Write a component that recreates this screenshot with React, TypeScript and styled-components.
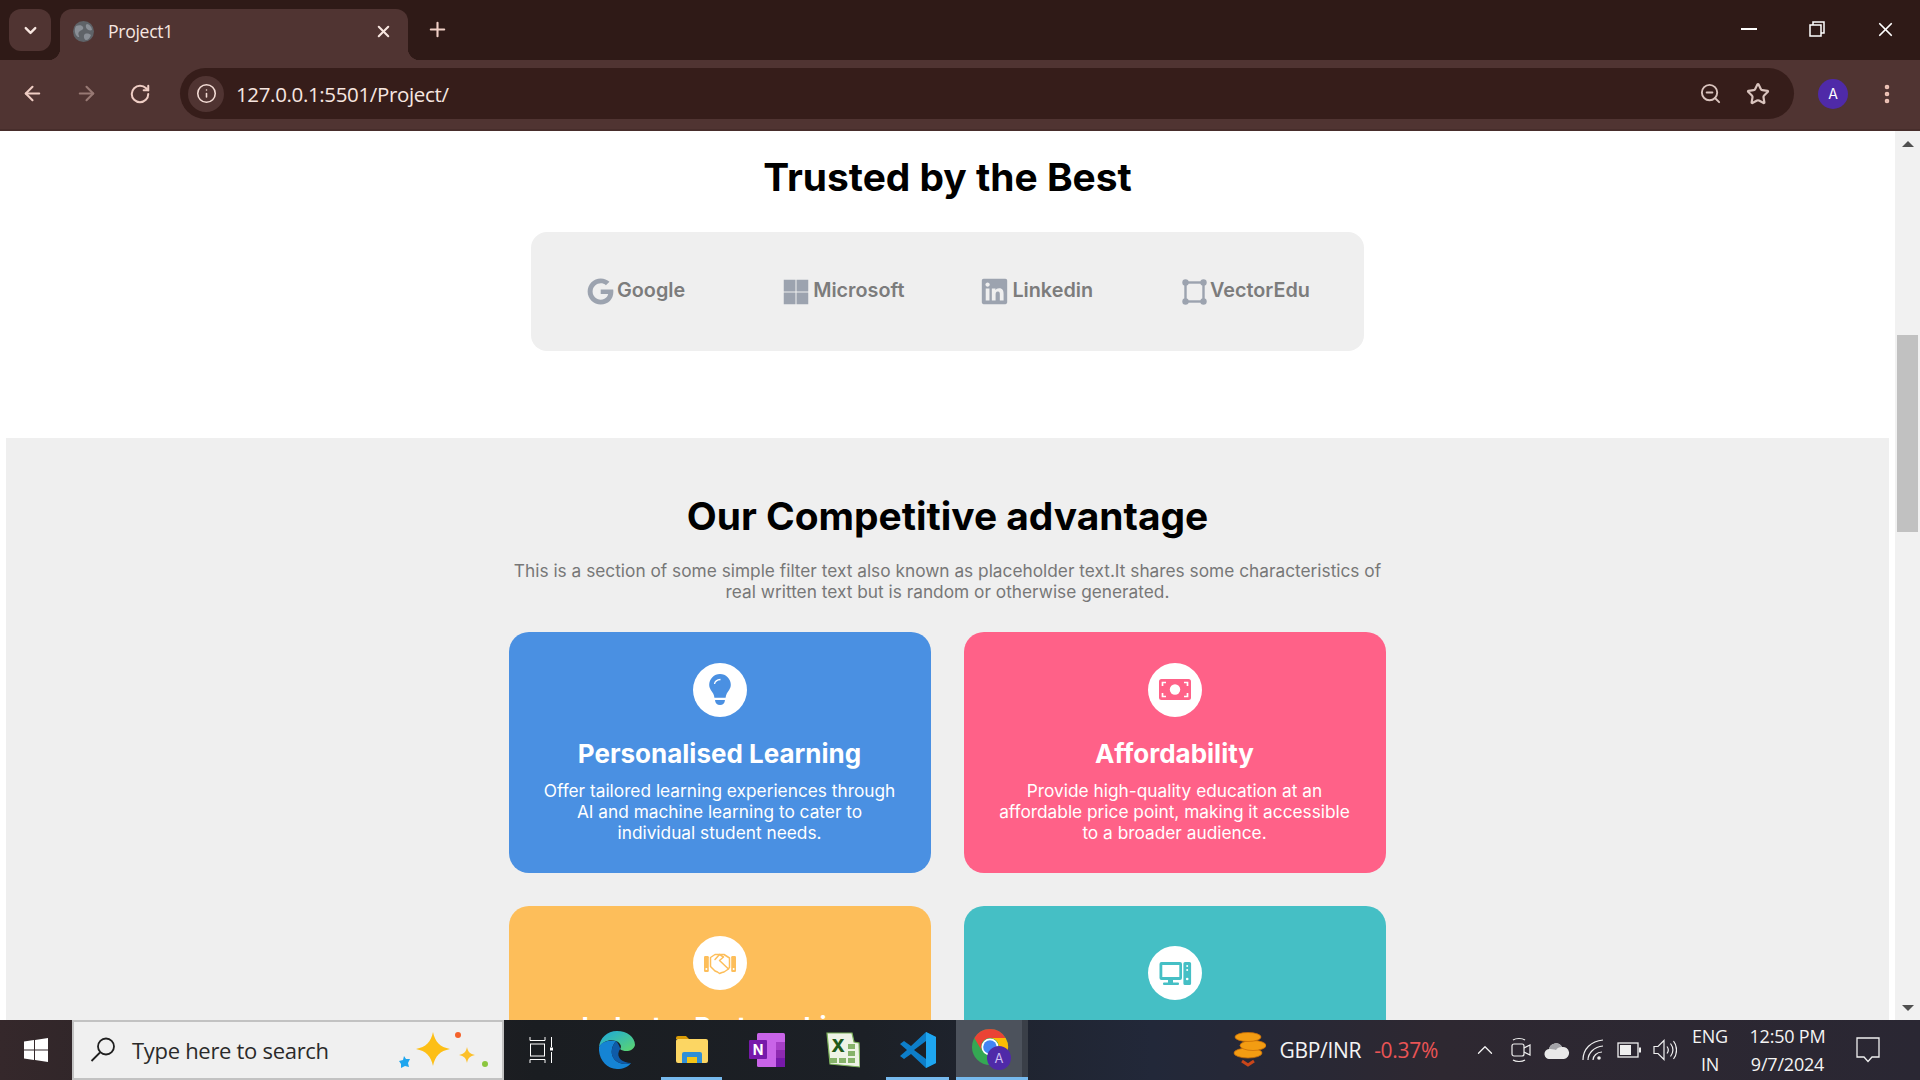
import React from "react";
import styled, { createGlobalStyle } from "styled-components";
import {
  ArrowLeft,
  ArrowRight,
  ChevronDown,
  ChevronUp,
  EllipsisVertical,
  Info,
  Plus,
  RotateCw,
  Star,
  X,
  ZoomOut,
} from "lucide-react";
import { FaGoogle, FaLinkedin, FaMicrosoft } from "react-icons/fa";

const GlobalStyle = createGlobalStyle`
  html, body {
    margin: 0;
    padding: 0;
    height: 100%;
    overflow: hidden;
    background: #ffffff;
    font-family: "Inter", "Liberation Sans", sans-serif;
  }
  * { box-sizing: border-box; }
`;

const Screen = styled.div`
  width: 1920px;
  height: 1080px;
  display: flex;
  flex-direction: column;
  overflow: hidden;
`;

/* browser chrome */
const TabStrip = styled.div`
  height: 60px;
  flex: none;
  display: flex;
  align-items: flex-start;
  background: #2f1a17;
  color: #f7e6e0;
  font-family: "Open Sans", "Noto Sans", sans-serif;
`;

const TabMenu = styled.div`
  width: 42px;
  height: 42px;
  margin: 9px 9px 0;
  border-radius: 12px;
  background: #503432;
  display: flex;
  align-items: center;
  justify-content: center;
`;

const Tab = styled.div`
  position: relative;
  width: 348px;
  height: 51px;
  margin-top: 9px;
  padding: 0 15px 7px 13px;
  background: #503432;
  border-radius: 12px 12px 0 0;
  display: flex;
  align-items: center;
  gap: 14px;
  font-size: 17.6px;
  letter-spacing: -0.3px;

  &::before,
  &::after {
    content: "";
    position: absolute;
    bottom: 0;
    width: 12px;
    height: 12px;
  }
  &::before {
    left: -12px;
    background: radial-gradient(circle at 0 0, #2f1a17 12px, #503432 12.5px);
  }
  &::after {
    right: -12px;
    background: radial-gradient(circle at 100% 0, #2f1a17 12px, #503432 12.5px);
  }
`;

const TabTitle = styled.span`
  flex: 1;
`;

const NewTab = styled.div`
  margin: 18px 0 0 18px;
  display: flex;
`;

const WindowControls = styled.div`
  margin-left: auto;
  display: flex;
  align-items: center;
  height: 58px;
  padding-right: 1px;
`;

const WindowButton = styled.div`
  width: 68px;
  display: flex;
  justify-content: center;
`;

const Toolbar = styled.div`
  height: 71px;
  flex: none;
  display: flex;
  align-items: center;
  padding: 0 0 2px 5px;
  background: #503432;
  border-bottom: 2px solid #472d2b;
  color: #efcdc4;
`;

const NavButton = styled.div<{ $dim?: boolean }>`
  width: 54px;
  display: flex;
  justify-content: center;
  opacity: ${(p) => (p.$dim ? 0.45 : 1)};
`;

const Omnibox = styled.div`
  width: 1614px;
  height: 51px;
  margin-left: 13px;
  padding: 0 12px 0 8px;
  border-radius: 26px;
  background: #361d1a;
  display: flex;
  align-items: center;
`;

const InfoChip = styled.div`
  width: 36px;
  height: 36px;
  border-radius: 50%;
  background: #503432;
  color: #f3dcd5;
  display: flex;
  align-items: center;
  justify-content: center;
`;

const Url = styled.div`
  margin-left: 12px;
  flex: 1;
  color: #f7e6e0;
  font-family: "Open Sans", "Noto Sans", sans-serif;
  font-size: 20.5px;
  letter-spacing: -0.35px;
`;

const OmniAction = styled.div`
  width: 48px;
  display: flex;
  justify-content: center;
  color: #d9c3bd;
`;

const Avatar = styled.div`
  width: 30px;
  height: 30px;
  margin-left: 24px;
  border-radius: 50%;
  background: #4f2aa8;
  color: #ffffff;
  font-size: 14px;
  display: flex;
  align-items: center;
  justify-content: center;
`;

const MenuDots = styled.div`
  margin-left: 27px;
  display: flex;
  color: #efc4b8;
`;

/* page */
const Viewport = styled.div`
  flex: 1;
  min-height: 0;
  display: flex;
  overflow: hidden;
  background: #ffffff;
`;

const Page = styled.main`
  flex: 1;
  min-width: 0;
  padding-top: 23px;
`;

const Scrollbar = styled.div`
  width: 25px;
  flex: none;
  padding: 0 1px;
  background: #f1f1f1;
  display: flex;
  flex-direction: column;
  align-items: center;
`;

const ScrollArrow = styled.div<{ $down?: boolean }>`
  width: 0;
  height: 0;
  margin: ${(p) => (p.$down ? "auto 0 9px" : "10px 0 0")};
  border-left: 6px solid transparent;
  border-right: 6px solid transparent;
  ${(p) => (p.$down ? "border-top: 6px solid #505050;" : "border-bottom: 6px solid #505050;")}
`;

const ScrollThumb = styled.div`
  width: 21px;
  height: 197px;
  margin-top: 188px;
  background: #c1c1c1;
`;

const Heading = styled.h2`
  margin: 0;
  text-align: center;
  color: #000000;
  font-size: 38.9px;
  line-height: 46px;
  font-weight: 700;
`;

const LogoBar = styled.div`
  width: 833px;
  height: 119px;
  margin: 32px 0 87px 531px;
  padding: 0 0 3px 56px;
  border-radius: 16px;
  background: #efefef;
  display: flex;
  align-items: center;
`;

const Logo = styled.div<{ $gap: number }>`
  margin-left: ${(p) => p.$gap}px;
  display: flex;
  align-items: center;
  gap: 3px;
  color: #7c7c7c;
  font-size: 19.8px;
  font-weight: 600;

  svg {
    color: #9ca3af;
    flex: none;
    margin-top: 3px;
  }
`;

const Advantages = styled.section`
  margin: 0 6px;
  padding-top: 55px;
  background: #efefef;
`;

const Intro = styled.p`
  width: 880px;
  margin: 21px auto 30px;
  text-align: center;
  color: #777777;
  font-size: 17.3px;
  line-height: 21px;
`;

const CardGrid = styled.div`
  display: grid;
  grid-template-columns: 422px 422px;
  gap: 33px;
  justify-content: center;
  padding-right: 1px;
`;

const Card = styled.article<{ $bg: string; $top: number }>`
  height: 241px;
  padding: ${(p) => p.$top}px 30px 30px;
  border-radius: 20px;
  background: ${(p) => p.$bg};
  color: #ffffff;
  text-align: center;
`;

const IconCircle = styled.div<{ $color: string }>`
  width: 54px;
  height: 54px;
  margin: 0 auto;
  border-radius: 50%;
  background: #ffffff;
  color: ${(p) => p.$color};
  display: flex;
  align-items: center;
  justify-content: center;
`;

const CardTitle = styled.h3`
  margin: 21px 0 10px;
  font-size: 26px;
  line-height: 32px;
  font-weight: 700;
`;

const CardText = styled.p`
  margin: 0;
  font-size: 17.3px;
  line-height: 21px;
  font-weight: 400;
`;

/* taskbar */
const Taskbar = styled.div`
  height: 60px;
  flex: none;
  display: flex;
  align-items: stretch;
  background: linear-gradient(90deg, #35282b 0, #1a1d21 28%, #1c2026 45%, #222839 60%, #2e2831 75%, #2a2733 100%);
  color: #f4f4f4;
  font-family: "Open Sans", "Noto Sans", sans-serif;
`;

const StartButton = styled.div`
  width: 72px;
  display: flex;
  align-items: center;
  justify-content: center;
`;

const SearchBox = styled.div`
  width: 432px;
  padding: 0 3px 0 16px;
  background: #f0f0f0;
  border: 2px solid #c2c2c2;
  display: flex;
  align-items: center;
  color: #2a2a2a;
  font-size: 22px;
  letter-spacing: -0.3px;
`;

const SearchLabel = styled.span`
  margin-left: 16px;
  flex: 1;
`;

const TaskSlot = styled.div<{ $w: number; $active?: boolean; $open?: boolean }>`
  position: relative;
  width: ${(p) => p.$w}px;
  display: flex;
  align-items: center;
  justify-content: center;
  background: ${(p) => (p.$active ? "#4c525c" : "transparent")};
  ${(p) => (p.$active ? "border-right: 6px solid #3a3f48; padding-left: 6px;" : "")}

  &::after {
    content: "";
    display: ${(p) => (p.$open ? "block" : "none")};
    position: absolute;
    left: ${(p) => (p.$active ? 0 : 7)}px;
    right: ${(p) => (p.$active ? -6 : 7)}px;
    bottom: 0;
    height: 3px;
    background: #76b9ed;
  }
`;

const Tray = styled.div`
  margin-left: auto;
  display: flex;
  align-items: center;
  font-size: 21px;
  letter-spacing: -0.3px;
`;

const Ticker = styled.div`
  display: flex;
  align-items: center;
  gap: 13px;
  margin-right: 29px;
`;

const Change = styled.span`
  color: #ea5455;
`;

const TraySlot = styled.div`
  width: 36px;
  display: flex;
  justify-content: center;
`;

const TrayText = styled.div<{ $w: number }>`
  width: ${(p) => p.$w}px;
  display: flex;
  flex-direction: column;
  align-items: center;
  gap: 4px;
  font-size: 18px;
  line-height: 24px;
  letter-spacing: -0.2px;
`;

const Notify = styled.div`
  width: 82px;
  padding-right: 22px;
  display: flex;
  justify-content: center;
`;

/* drawings */
const Bulb = () => (
  <svg width="54" height="54" viewBox="0 0 54 54" fill="currentColor">
    <path d="M27 11a10.8 10.8 0 0 0-10.8 10.8c0 4 2.6 6 4.1 9 .7 1.3.9 2.6 1.1 4h11.2c.2-1.4.4-2.7 1.1-4 1.5-3 4.1-5 4.1-9A10.8 10.8 0 0 0 27 11z" />
    <path d="M22 37h10c-.3 3.200-2 5-5 5s-4.700-1.800-5-5z" />
    <path d="M21.500 21c.4-2.400 2.500-4.300 6-4.500" fill="none" stroke="#fff" strokeWidth="1.300" />
  </svg>
);

const Money = () => (
  <svg width="54" height="54" viewBox="0 0 54 54">
    <rect x="11" y="16" width="32" height="21" rx="2.500" fill="currentColor" />
    <circle cx="27" cy="26.500" r="5.200" fill="#fff" />
    <path
      d="M14.500 23v-3.500H18M39.500 23v-3.500H36M14.500 30v3.500H18M39.500 30v3.500H36"
      fill="none"
      stroke="#fff"
      strokeWidth="1.700"
    />
  </svg>
);

const Handshake = () => (
  <svg width="54" height="54" viewBox="0 0 54 54" fill="currentColor">
    <rect x="11" y="20" width="4.800" height="16" rx="1.200" />
    <rect x="38.200" y="20" width="4.800" height="16" rx="1.200" />
    <circle cx="13.400" cy="33" r="1" fill="#fff" />
    <circle cx="40.600" cy="33" r="1" fill="#fff" />
    <g fill="none" stroke="currentColor" strokeWidth="1.500" strokeLinejoin="round" strokeLinecap="round">
      <path d="M17.500 21.500 22 18.500h9l5.500 3.500v9.500l-2.500 2.500-3 2-2 .5-2.500 1-2-1.500-2.500-1-4.500-4.500z" />
      <path d="M22 23.500l4.500-5 4 2.500-4 3.500 9 8.500" />
    </g>
  </svg>
);

const Computer = () => (
  <svg width="54" height="54" viewBox="0 0 54 54" fill="currentColor">
    <path d="M13.500 16h18.500a2 2 0 0 1 2 2v14a2 2 0 0 1-2 2H13.500a2 2 0 0 1-2-2V18a2 2 0 0 1 2-2zm.8 3v12h17V19z" fillRule="evenodd" />
    <rect x="20" y="34" width="5" height="3" />
    <rect x="15" y="36.500" width="16" height="2.500" rx="1" />
    <path d="M37 16h4.500a1.600 1.600 0 0 1 1.600 1.600v19.800a1.600 1.600 0 0 1-1.600 1.600H37a1.600 1.600 0 0 1-1.600-1.600V17.600A1.600 1.600 0 0 1 37 16z" />
    <circle cx="39.200" cy="20" r="1" fill="#fff" />
    <circle cx="39.200" cy="24" r="1" fill="#fff" />
    <circle cx="39.200" cy="33" r="1.300" fill="#fff" />
  </svg>
);

const VectorMark = () => (
  <svg width="25" height="26" viewBox="0 0 25 26" fill="none" stroke="currentColor" strokeWidth="2.400">
    <rect x="3.500" y="3.500" width="18" height="19" />
    <g fill="currentColor" stroke="none">
      <circle cx="3.500" cy="3.500" r="3.200" />
      <circle cx="21.500" cy="3.500" r="3.200" />
      <circle cx="3.500" cy="22.500" r="3.200" />
      <circle cx="21.500" cy="22.500" r="3.200" />
    </g>
  </svg>
);

const Restore = () => (
  <svg width="16" height="16" viewBox="0 0 16 16" fill="none" stroke="#fff" strokeWidth="1.500">
    <rect x="1" y="4" width="11" height="11" />
    <path d="M4 4V1h11v11h-3" />
  </svg>
);

const Favicon = () => (
  <svg width="21" height="21" viewBox="0 0 21 21">
    <circle cx="10.500" cy="10.500" r="10.500" fill="#5f6368" />
    <path d="M3 5c3-1 6-1 7 1s-1 3-3 4-2 3-1 5-2 1-3-1-2-6 0-9zM14 3c2 0 5 3 5 6-2 1-4 0-5-1s-2-4 0-5zM12 13c2-1 5 0 6 1-1 3-3 5-5 5s-3-5-1-6z" fill="#8a8f96" />
  </svg>
);

const WinLogo = () => (
  <svg width="24" height="24" viewBox="0 0 24 24" fill="#fff">
    <path d="M0 3.400 10 2v9.400H0zM11 1.900 24 0v11.400H11zM0 12.600h10V22L0 20.600zM11 12.600h13V24l-13-1.900z" />
  </svg>
);

const SearchGlass = () => (
  <svg width="26" height="26" viewBox="0 0 26 26" fill="none" stroke="#1f1f1f" strokeWidth="1.800">
    <circle cx="16" cy="9.500" r="8" />
    <path d="M10 15.500 1.500 24" />
  </svg>
);

const Sparkles = () => (
  <svg width="100" height="50" viewBox="0 0 100 50">
    <path d="M34 7c2 10 7 15 17 17-10 2-15 7-17 17-2-10-7-15-17-17 10-2 15-7 17-17z" fill="#fdbf16" />
    <path d="M68 22c1 5 3 7 8 8-5 1-7 3-8 8-1-5-3-7-8-8 5-1 7-3 8-8z" fill="#fcc02a" />
    <path d="M5 31l2 3 4 0-2 4 1 4-4-1-4 2 0-4-2-3 4-1z" fill="#1ea5ee" />
    <circle cx="59" cy="10" r="3" fill="#f4622b" />
    <circle cx="86" cy="39" r="3" fill="#8cc63f" />
  </svg>
);

const TaskView = () => (
  <svg width="26" height="26" viewBox="0 0 26 26" fill="none" stroke="#fff" strokeWidth="1">
    <path d="M1 3.500h15M1 3.500V0M16 3.500V0M1 22.500h15M1 22.500V26M16 22.500V26M22.500 0v10M22.500 15v11" />
    <rect x="1.500" y="7" width="14" height="12" />
    <rect x="21" y="10.500" width="3" height="3" fill="#fff" stroke="none" />
  </svg>
);

const Edge = () => (
  <svg width="36" height="38" viewBox="0 0 36 38">
    <defs>
      <linearGradient id="edgeTop" x1="0" y1="0" x2="1" y2="1">
        <stop offset="0" stopColor="#1ba7e0" />
        <stop offset="1" stopColor="#5ed66b" />
      </linearGradient>
    </defs>
    <path d="M18 0C8 0 1 7 0 16c4-6 11-8 17-6 5 2 6 6 4 8 5 4 14 2 15-4C36 6 28 0 18 0z" fill="url(#edgeTop)" />
    <path d="M0 16c-1 11 7 22 18 22 6 0 11-2 14-6-5 2-12 1-16-3-5-5-4-13 1-19-7-1-14 0-17 6z" fill="#1584d4" />
    <path d="M17 10c-5 6-6 14-1 19 4 4 11 5 16 3-8 0-15-5-12-12 1-2 2-2 1-3-1-3-2-5-4-7z" fill="#0f5ba8" />
  </svg>
);

const Explorer = () => (
  <svg width="32" height="28" viewBox="0 0 32 28">
    <path d="M0 2a2 2 0 0 1 2-2h8l3 3H0z" fill="#d99b06" />
    <rect x="0" y="3" width="32" height="24" rx="2" fill="#fcd663" />
    <path d="M6 27V18a2 2 0 0 1 2-2h16a2 2 0 0 1 2 2v9h-5v-6H11v6z" fill="#2f8fd8" />
    <rect x="11" y="21" width="10" height="6" fill="#f5c518" />
  </svg>
);

const OneNote = () => (
  <svg width="36" height="34" viewBox="0 0 36 34">
    <rect x="8" y="0" width="28" height="34" rx="1.500" fill="#c964e8" />
    <rect x="27" y="9" width="9" height="8" fill="#a63fc6" />
    <rect x="27" y="17" width="9" height="8" fill="#8e2ab0" />
    <rect x="27" y="25" width="9" height="9" fill="#7719aa" />
    <rect x="0" y="7" width="18" height="19" rx="1" fill="#7719aa" />
    <text x="9" y="22" textAnchor="middle" fill="#fff" fontSize="14" fontWeight="700" fontFamily="Inter, sans-serif">N</text>
  </svg>
);

const Excel = () => (
  <svg width="36" height="36" viewBox="0 0 36 36">
    <path d="M3 1h25l2 9 5 1 1 24-30-3z" fill="#eef3e6" stroke="#7cb25a" strokeWidth="1.200" />
    <g fill="#86b36a">
      <rect x="24" y="12" width="7" height="5" />
      <rect x="24" y="19" width="7" height="5" />
      <rect x="24" y="26" width="7" height="5" />
      <rect x="6" y="26" width="7" height="5" />
      <rect x="15" y="26" width="7" height="5" />
    </g>
    <text x="14" y="20" textAnchor="middle" fill="#1f5a1a" fontSize="18" fontWeight="800" fontFamily="Inter, sans-serif">X</text>
  </svg>
);

const VsCode = () => (
  <svg width="36" height="36" viewBox="0 0 36 36">
    <path d="M26 0 36 5v26l-10 5-15-14-7 5-4-3 7-6-7-6 4-3 7 5z" fill="#0d7ec9" />
    <path d="M26 0 36 5v26l-10 5z" fill="#1ea6f0" />
    <path d="M26 9v18l-12-9z" fill="#1c2026" />
  </svg>
);

const Chrome = () => (
  <svg width="40" height="42" viewBox="0 0 40 42">
    <circle cx="18" cy="18" r="18" fill="#34a853" />
    <path d="M18 0a18 18 0 0 0-15.600 9L10 22a9 9 0 0 1 8-13h15.600A18 18 0 0 0 18 0z" fill="#ea4335" />
    <path d="M33.600 9H18a9 9 0 0 1 8 13l-8 14A18 18 0 0 0 33.600 9z" fill="#fbbc04" />
    <circle cx="18" cy="18" r="8.500" fill="#fff" />
    <circle cx="18" cy="18" r="6.800" fill="#4285f4" />
    <circle cx="27" cy="29" r="12" fill="#4f2aa8" />
    <text x="27" y="34" textAnchor="middle" fill="#cdbdf0" fontSize="13" fontFamily="Inter, sans-serif">A</text>
  </svg>
);

const Coins = () => (
  <svg width="33" height="36" viewBox="0 0 33 36">
    <g fill="#f39c12" stroke="#c96f08" strokeWidth="0.800">
      <ellipse cx="15" cy="21" rx="14" ry="5" />
      <ellipse cx="20" cy="13.500" rx="13" ry="5" />
      <ellipse cx="15" cy="5" rx="13" ry="4.500" />
    </g>
    <path d="M9 29l6 4 6-4" fill="none" stroke="#c8461a" strokeWidth="3" />
  </svg>
);

const MeetNow = () => (
  <svg width="22" height="30" viewBox="0 0 22 30" fill="none" stroke="#f0f0f0" strokeWidth="1.200">
    <rect x="2" y="9" width="12" height="12" rx="2" />
    <path d="M14 13l6-3v10l-6-3M3 5c3-2 9-2 12 0M3 25c3 2 9 2 12 0" />
  </svg>
);

const Cloud = () => (
  <svg width="26" height="18" viewBox="0 0 26 18">
    <path d="M6 18a5 5 0 0 1-1-10A7 7 0 0 1 18 6a6 6 0 0 1 2 12z" fill="#e9e9e9" />
    <path d="M5 8a7 7 0 0 1 13-2c-3 0-5 1-6 3-2-1-5-1-7-1z" fill="#a3a3a8" />
  </svg>
);

const Wifi = () => (
  <svg width="22" height="22" viewBox="0 0 22 22" fill="none" stroke="#f0f0f0" strokeWidth="1.200">
    <path d="M1 21C1 10 9 2 21 1M6 21c0-7 6-13 15-14M11 21c0-4 4-8 9-8" />
    <circle cx="17" cy="19" r="1.800" fill="#f0f0f0" stroke="none" />
  </svg>
);

const Battery = () => (
  <svg width="24" height="16" viewBox="0 0 24 16">
    <rect x="1" y="1" width="20" height="14" fill="none" stroke="#f0f0f0" strokeWidth="1.300" />
    <rect x="3" y="3" width="11" height="10" fill="#f0f0f0" />
    <rect x="22" y="5.500" width="2" height="5" fill="#f0f0f0" />
  </svg>
);

const Speaker = () => (
  <svg width="24" height="22" viewBox="0 0 24 22" fill="none" stroke="#f0f0f0" strokeWidth="1.200">
    <path d="M1 7.500h4l6-6v19l-6-6H1zM14 7.500c1.500 2 1.500 5 0 7M17.500 4.500c3 4 3 9 0 13M20.500 2c4 5 4 13 0 18" />
  </svg>
);

const NotifyIcon = () => (
  <svg width="24" height="26" viewBox="0 0 24 26" fill="none" stroke="#f0f0f0" strokeWidth="1.300">
    <path d="M1 1h22v19h-7l-4 4.500L8 20H1z" />
  </svg>
);

function App() {
  return (
    <Screen>
      <GlobalStyle />
      <TabStrip>
        <TabMenu>
          <ChevronDown size={19} strokeWidth={3} color="#f7e6e0" />
        </TabMenu>
        <Tab>
          <Favicon />
          <TabTitle>Project1</TabTitle>
          <X size={19} strokeWidth={2.6} color="#f7e6e0" />
        </Tab>
        <NewTab>
          <Plus size={23} strokeWidth={2.2} color="#f0cfc6" />
        </NewTab>
        <WindowControls>
          <WindowButton>
            <svg width="16" height="2" viewBox="0 0 16 2">
              <rect width="16" height="2" fill="#fff" />
            </svg>
          </WindowButton>
          <WindowButton>
            <Restore />
          </WindowButton>
          <WindowButton>
            <X size={23} strokeWidth={1.8} color="#fff" />
          </WindowButton>
        </WindowControls>
      </TabStrip>

      <Toolbar>
        <NavButton>
          <ArrowLeft size={23} strokeWidth={2.2} />
        </NavButton>
        <NavButton $dim>
          <ArrowRight size={23} strokeWidth={2.2} />
        </NavButton>
        <NavButton>
          <RotateCw size={22} strokeWidth={2.2} />
        </NavButton>
        <Omnibox>
          <InfoChip>
            <Info size={21} strokeWidth={1.8} />
          </InfoChip>
          <Url>127.0.0.1:5501/Project/</Url>
          <OmniAction>
            <ZoomOut size={23} strokeWidth={2} />
          </OmniAction>
          <OmniAction>
            <Star size={24} strokeWidth={2.2} />
          </OmniAction>
        </Omnibox>
        <Avatar>A</Avatar>
        <MenuDots>
          <EllipsisVertical size={24} strokeWidth={2.6} />
        </MenuDots>
      </Toolbar>

      <Viewport>
        <Page>
          <Heading>Trusted by the Best</Heading>
          <LogoBar>
            <Logo $gap={0}>
              <FaGoogle size={27} />
              Google
            </Logo>
            <Logo $gap={97}>
              <FaMicrosoft size={28} />
              Microsoft
            </Logo>
            <Logo $gap={76}>
              <FaLinkedin size={29} />
              Linkedin
            </Logo>
            <Logo $gap={89}>
              <VectorMark />
              VectorEdu
            </Logo>
          </LogoBar>

          <Advantages>
            <Heading>Our Competitive advantage</Heading>
            <Intro>
              This is a section of some simple filter text also known as placeholder text.It shares some
              characteristics of real written text but is random or otherwise generated.
            </Intro>
            <CardGrid>
              <Card $bg="#4a90e2" $top={31}>
                <IconCircle $color="#4a90e2">
                  <Bulb />
                </IconCircle>
                <CardTitle>Personalised Learning</CardTitle>
                <CardText>
                  Offer tailored learning experiences through AI and machine learning to cater to individual
                  student needs.
                </CardText>
              </Card>
              <Card $bg="#ff6188" $top={31}>
                <IconCircle $color="#ff6188">
                  <Money />
                </IconCircle>
                <CardTitle>Affordability</CardTitle>
                <CardText>
                  Provide high-quality education at an affordable price point, making it accessible to a
                  broader audience.
                </CardText>
              </Card>
              <Card $bg="#fdbe5a" $top={30}>
                <IconCircle $color="#fdbe5a">
                  <Handshake />
                </IconCircle>
                <CardTitle>Industry Partnerships</CardTitle>
              </Card>
              <Card $bg="#45bfc5" $top={40}>
                <IconCircle $color="#45bfc5">
                  <Computer />
                </IconCircle>
              </Card>
            </CardGrid>
          </Advantages>
        </Page>
        <Scrollbar>
          <ScrollArrow />
          <ScrollThumb />
          <ScrollArrow $down />
        </Scrollbar>
      </Viewport>

      <Taskbar>
        <StartButton>
          <WinLogo />
        </StartButton>
        <SearchBox>
          <SearchGlass />
          <SearchLabel>Type here to search</SearchLabel>
          <Sparkles />
        </SearchBox>
        <TaskSlot $w={75}>
          <TaskView />
        </TaskSlot>
        <TaskSlot $w={75}>
          <Edge />
        </TaskSlot>
        <TaskSlot $w={75} $open>
          <Explorer />
        </TaskSlot>
        <TaskSlot $w={75}>
          <OneNote />
        </TaskSlot>
        <TaskSlot $w={75}>
          <Excel />
        </TaskSlot>
        <TaskSlot $w={77} $open>
          <VsCode />
        </TaskSlot>
        <TaskSlot $w={72} $active $open>
          <Chrome />
        </TaskSlot>
        <Tray>
          <Ticker>
            <Coins />
            <span>GBP/INR</span>
            <Change>-0.37%</Change>
          </Ticker>
          <TraySlot>
            <ChevronUp size={26} strokeWidth={1.2} />
          </TraySlot>
          <TraySlot>
            <MeetNow />
          </TraySlot>
          <TraySlot>
            <Cloud />
          </TraySlot>
          <TraySlot>
            <Wifi />
          </TraySlot>
          <TraySlot>
            <Battery />
          </TraySlot>
          <TraySlot>
            <Speaker />
          </TraySlot>
          <TrayText $w={54}>
            <span>ENG</span>
            <span>IN</span>
          </TrayText>
          <TrayText $w={101}>
            <span>12:50 PM</span>
            <span>9/7/2024</span>
          </TrayText>
          <Notify>
            <NotifyIcon />
          </Notify>
        </Tray>
      </Taskbar>
    </Screen>
  );
}

export default App;
